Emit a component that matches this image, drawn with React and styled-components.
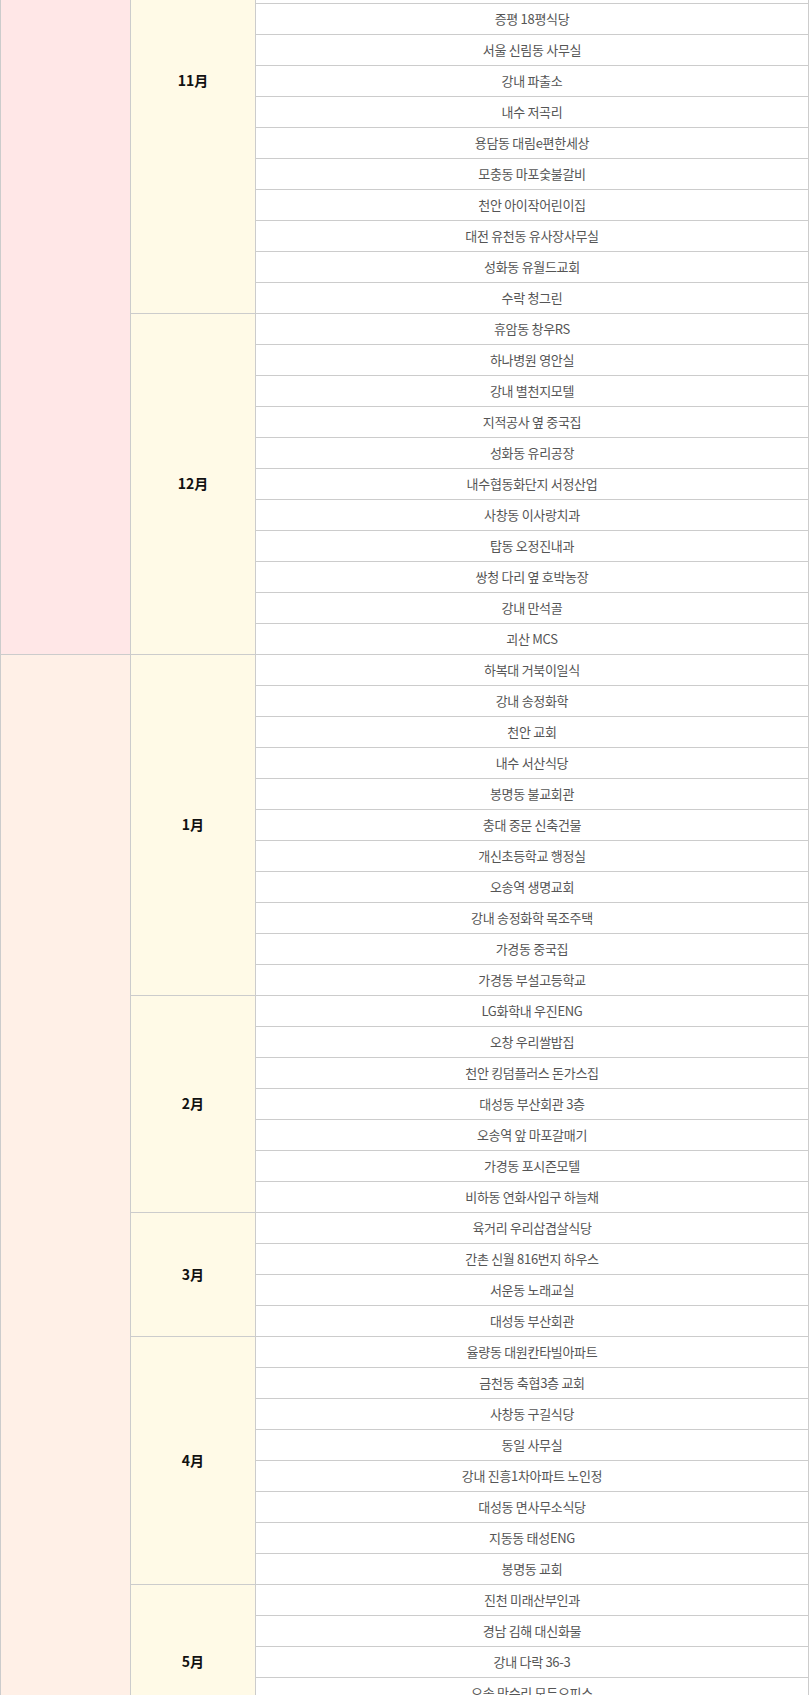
import styled, { createGlobalStyle } from 'styled-components';

const GlobalStyle = createGlobalStyle`
  html, body {
    margin: 0;
    padding: 0;
    background: #fff;
  }
  body {
    font-family: "Noto Sans CJK KR", "Noto Sans", sans-serif;
  }
`;

const Page = styled.div`
  width: 810px;
  overflow: hidden;
`;

// the shot is taken part way down a long list, so the table starts above the fold
const HistoryTable = styled.table`
  width: 809px;
  margin-top: -152px;
  border-collapse: collapse;
  table-layout: fixed;
`;

const tones = {
  pink: '#ffe7e7',
  peach: '#fff0e7',
};

const YearCell = styled.td`
  width: 130px;
  border: 1px solid #cccccc;
  background: ${(p) => tones[p.$tone]};
  padding: 0;
`;

const MonthCell = styled.td`
  width: 125px;
  border: 1px solid #cccccc;
  background: #fffae7;
  padding: 0 0 2px;
  text-align: center;
  vertical-align: middle;
  font-size: 14px;
  font-weight: bold;
  color: #111;
`;

const PlaceCell = styled.td`
  height: 31px;
  box-sizing: border-box;
  border: 1px solid #cccccc;
  padding: 0 8px 2px;
  text-align: center;
  vertical-align: middle;
  font-size: 13px;
  color: #555;
  letter-spacing: -0.3px;
  white-space: nowrap;
`;

const years = [
  {
    year: '2015',
    tone: 'pink',
    months: [
      {
        month: '11月',
        places: [
          '복대동 현대아파트',
          '오창 과학단지 사무실',
          '가경동 터미널상가',
          '운천동 한식뷔페',
          '분평동 주공아파트',
          '증평 18평식당',
          '서울 신림동 사무실',
          '강내 파출소',
          '내수 저곡리',
          '용담동 대림e편한세상',
          '모충동 마포숯불갈비',
          '천안 아이작어린이집',
          '대전 유천동 유사장사무실',
          '성화동 유월드교회',
          '수락 청그린',
        ],
      },
      {
        month: '12月',
        places: [
          '휴암동 창우RS',
          '하나병원 영안실',
          '강내 별천지모텔',
          '지적공사 옆 중국집',
          '성화동 유리공장',
          '내수협동화단지 서정산업',
          '사창동 이사랑치과',
          '탑동 오정진내과',
          '쌍청 다리 옆 호박농장',
          '강내 만석골',
          '괴산 MCS',
        ],
      },
    ],
  },
  {
    year: '2016',
    tone: 'peach',
    months: [
      {
        month: '1月',
        places: [
          '하복대 거북이일식',
          '강내 송정화학',
          '천안 교회',
          '내수 서산식당',
          '봉명동 불교회관',
          '충대 중문 신축건물',
          '개신초등학교 행정실',
          '오송역 생명교회',
          '강내 송정화학 목조주택',
          '가경동 중국집',
          '가경동 부설고등학교',
        ],
      },
      {
        month: '2月',
        places: [
          'LG화학내 우진ENG',
          '오창 우리쌀밥집',
          '천안 킹덤플러스 돈가스집',
          '대성동 부산회관 3층',
          '오송역 앞 마포갈매기',
          '가경동 포시즌모텔',
          '비하동 연화사입구 하늘채',
        ],
      },
      {
        month: '3月',
        places: [
          '육거리 우리삽겹살식당',
          '간촌 신월 816번지 하우스',
          '서운동 노래교실',
          '대성동 부산회관',
        ],
      },
      {
        month: '4月',
        places: [
          '율량동 대원칸타빌아파트',
          '금천동 축협3층 교회',
          '사창동 구길식당',
          '동일 사무실',
          '강내 진흥1차아파트 노인정',
          '대성동 면사무소식당',
          '지동동 태성ENG',
          '봉명동 교회',
        ],
      },
      {
        month: '5月',
        places: [
          '진천 미래산부인과',
          '경남 김해 대신화물',
          '강내 다락 36-3',
          '오송 만수리 모두오피스',
          '봉명동 한빛식당',
        ],
      },
    ],
  },
];

const YearRows = ({ tone, months }) => {
  const total = months.reduce((sum, m) => sum + m.places.length, 0);
  const rows = [];
  months.forEach((m, mi) => {
    m.places.forEach((place, pi) => {
      rows.push(
        <tr key={m.month + pi}>
          {mi === 0 && pi === 0 && <YearCell rowSpan={total} $tone={tone} />}
          {pi === 0 && <MonthCell rowSpan={m.places.length}>{m.month}</MonthCell>}
          <PlaceCell>{place}</PlaceCell>
        </tr>
      );
    });
  });
  return rows;
};

const App = () => (
  <Page>
    <GlobalStyle />
    <HistoryTable>
      <colgroup>
        <col style={{ width: 130 }} />
        <col style={{ width: 125 }} />
        <col />
      </colgroup>
      <tbody>
        {years.map((y) => (
          <YearRows key={y.year} {...y} />
        ))}
      </tbody>
    </HistoryTable>
  </Page>
);

export default App;
